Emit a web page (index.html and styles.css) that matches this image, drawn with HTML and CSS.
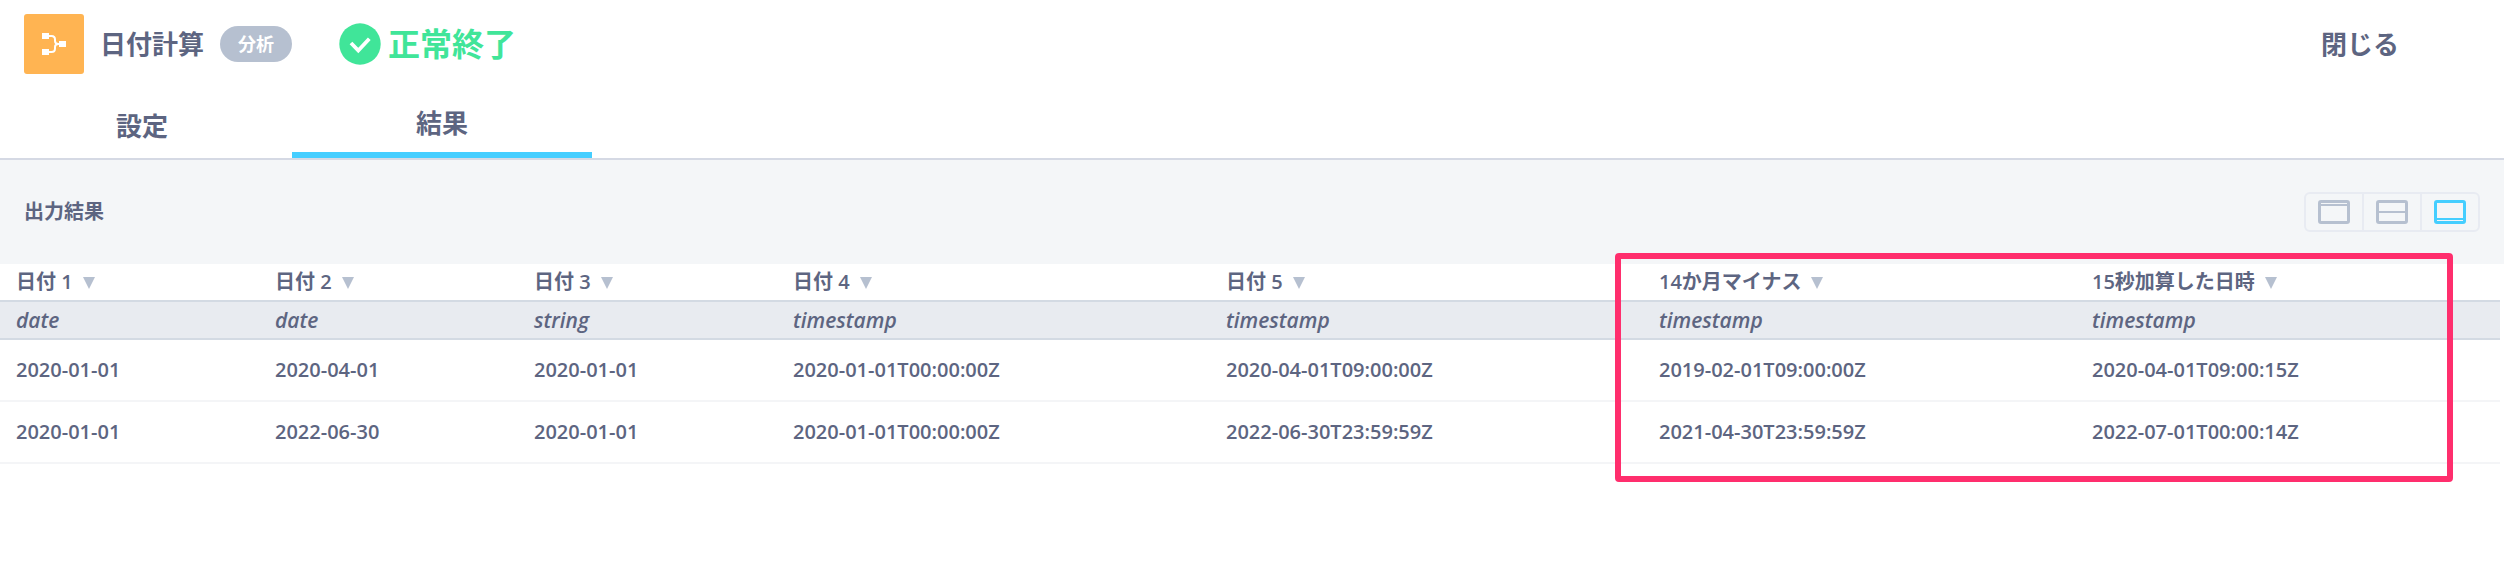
FILE: index.html
```html
<!DOCTYPE html>
<html lang="ja">
<head>
<meta charset="utf-8">
<title>日付計算</title>
<link rel="stylesheet" href="styles.css">
</head>
<body>
<header class="header">
  <span class="node-icon">
    <svg width="60" height="60" viewBox="0 0 60 60" aria-hidden="true">
      <path d="M24 22h3.500q3.500 0 3.500 3.500v1.500q0 3 3.500 3h2M24 38h3.500q3.500 0 3.500-3.500v-1.500q0-3 3.500-3" fill="none" stroke="#fff" stroke-width="2"/>
      <path d="M18 19h7v6h-7zM18 35h7v6h-7zM35 27h7v6h-7z" fill="#fff"/>
    </svg>
  </span>
  <h1 class="title">日付計算</h1>
  <span class="badge">分析</span>
  <div class="status">
    <svg width="42" height="42" viewBox="0 0 42 42" aria-hidden="true">
      <circle cx="21" cy="21" r="20.700" fill="#40e599"/>
      <path d="M12 20l7.300 7.500L30.300 15.800" fill="none" stroke="#fff" stroke-width="3.800"/>
    </svg>
    <span>正常終了</span>
  </div>
  <button class="close" type="button">閉じる</button>
</header>
<nav class="tabs">
  <a class="tab tab-first" href="#settings">設定</a>
  <a class="tab tab-active" href="#result" aria-current="page">結果</a>
</nav>
<main class="main">
  <section class="toolbar">
    <h2 class="subtitle">出力結果</h2>
    <div class="views">
      <button class="view" type="button" aria-label="上部表示">
        <svg width="32" height="24" viewBox="0 0 32 24"><rect x="1.500" y="1.500" width="29" height="21" rx="1.500"/><path d="M2 5h28"/></svg>
      </button>
      <button class="view" type="button" aria-label="分割表示">
        <svg width="32" height="24" viewBox="0 0 32 24"><rect x="1.500" y="1.500" width="29" height="21" rx="1.500"/><path d="M2 12h28"/></svg>
      </button>
      <button class="view view-active" type="button" aria-label="下部表示">
        <svg width="32" height="24" viewBox="0 0 32 24"><rect x="1.500" y="1.500" width="29" height="21" rx="1.500"/><path d="M2 19h28"/></svg>
      </button>
    </div>
  </section>
  <div class="result">
    <table class="grid">
      <colgroup><col class="narrow"><col class="narrow"><col class="narrow"><col class="wide"><col class="wide"><col class="wide"><col></colgroup>
      <thead>
        <tr class="names">
          <th scope="col">日付 1<i class="caret"></i></th>
          <th scope="col">日付 2<i class="caret"></i></th>
          <th scope="col">日付 3<i class="caret"></i></th>
          <th scope="col">日付 4<i class="caret"></i></th>
          <th scope="col">日付 5<i class="caret"></i></th>
          <th scope="col">14か月マイナス<i class="caret"></i></th>
          <th scope="col">15秒加算した日時<i class="caret"></i></th>
        </tr>
        <tr class="types">
          <td>date</td><td>date</td><td>string</td><td>timestamp</td><td>timestamp</td><td>timestamp</td><td>timestamp</td>
        </tr>
      </thead>
      <tbody>
        <tr><td>2020-01-01</td><td>2020-04-01</td><td>2020-01-01</td><td>2020-01-01T00:00:00Z</td><td>2020-04-01T09:00:00Z</td><td>2019-02-01T09:00:00Z</td><td>2020-04-01T09:00:15Z</td></tr>
        <tr><td>2020-01-01</td><td>2022-06-30</td><td>2020-01-01</td><td>2020-01-01T00:00:00Z</td><td>2022-06-30T23:59:59Z</td><td>2021-04-30T23:59:59Z</td><td>2022-07-01T00:00:14Z</td></tr>
      </tbody>
    </table>
    <div class="highlight"></div>
  </div>
</main>
</body>
</html>
```
FILE: styles.css
```css
* { box-sizing: border-box; }

body {
  margin: 0;
  background: #fff;
  color: #5d6581;
  font-family: "Open Sans", "Noto Sans CJK JP", sans-serif;
  font-size: 20px;
  font-weight: 600;
}

button {
  margin: 0;
  padding: 0;
  border: 0;
  background: none;
  color: inherit;
  font: inherit;
  cursor: pointer;
}

.header {
  display: flex;
  align-items: center;
  height: 88px;
  padding: 0 105px 0 24px;
}

.node-icon {
  width: 60px;
  height: 60px;
  border-radius: 3px;
  background: #ffb452;
}

.node-icon svg { display: block; }

.title {
  margin: 0 0 0 16px;
  font-size: 26px;
  font-weight: 600;
  line-height: 36px;
}

.badge {
  width: 72px;
  margin-left: 16px;
  border-radius: 18px;
  background: #b6c0d0;
  color: #fff;
  font-size: 18px;
  line-height: 36px;
  text-align: center;
}

.status {
  display: flex;
  align-items: center;
  gap: 7px;
  margin-left: 47px;
  color: #40e599;
  font-size: 32px;
  line-height: 42px;
}

.close {
  margin-left: auto;
  font-size: 26px;
  line-height: 36px;
}

.tabs {
  display: flex;
  height: 72px;
  border-bottom: 2px solid #d5d9e4;
}

.tab {
  width: 300px;
  color: inherit;
  font-size: 26px;
  line-height: 76px;
  text-align: center;
  text-decoration: none;
}

.tab-first {
  width: 292px;
  padding-right: 8px;
}

.tab-active {
  border-bottom: 6px solid #45ceff;
  line-height: 70px;
}

.main { padding-bottom: 100px; }

.toolbar {
  display: flex;
  align-items: center;
  justify-content: space-between;
  height: 104px;
  padding: 0 24px;
  background: #f4f6f8;
}

.subtitle {
  margin: 0;
  font-size: 20px;
  font-weight: 600;
  line-height: 28px;
}

.views {
  display: flex;
  border: 2px solid #e8ebf2;
  border-radius: 6px;
}

.view {
  display: flex;
  align-items: center;
  justify-content: center;
  width: 58px;
  height: 36px;
  color: #b6c0d0;
}

.view:first-child { width: 56px; }

.view + .view { border-left: 2px solid #e8ebf2; }

.view svg {
  fill: none;
  stroke: currentColor;
  stroke-width: 2;
}

.view rect { stroke-width: 3; }

.view-active { color: #45ceff; }

.result {
  position: relative;
  padding-right: 4px;
}

.grid {
  width: 100%;
  border-collapse: separate;
  border-spacing: 0;
  table-layout: fixed;
}

.narrow { width: 259px; }
.wide { width: 433px; }

.grid th,
.grid td {
  height: 62px;
  padding: 0 16px;
  border-bottom: 2px solid #f4f5f7;
  font-weight: 600;
  line-height: 28px;
  text-align: left;
  white-space: nowrap;
}

.grid .names th,
.grid .types td {
  height: 38px;
  border-color: #d3dae3;
}

.grid .types td {
  background: #e8ebf0;
  font-size: 21px;
  font-style: italic;
}

.caret {
  display: inline-block;
  margin-left: 10px;
  border: 6px solid transparent;
  border-top: 12px solid #b6c0d0;
  border-bottom: 0;
}

.highlight {
  position: absolute;
  top: -11px;
  right: 51px;
  bottom: -18px;
  left: 1615px;
  border: 6px solid #ff2e6d;
  border-radius: 4px;
  pointer-events: none;
}
```
